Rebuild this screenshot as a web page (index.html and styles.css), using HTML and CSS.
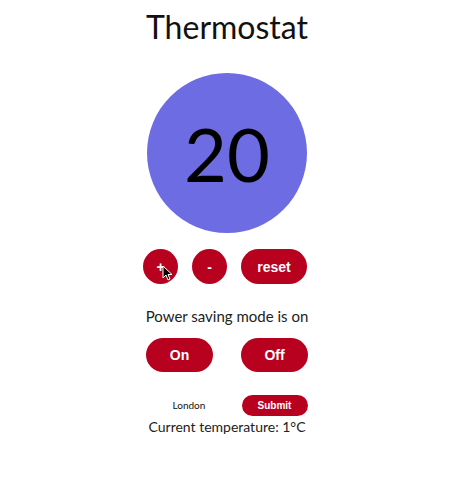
FILE: index.html
```html
<!DOCTYPE html>
<html>
<head>
<meta charset="utf-8">
<link rel="stylesheet" href="styles.css">
</head>
<body>
<div class="app">
  <h1 class="title">Thermostat</h1>
  <div class="dial">20</div>
  <div class="controls">
    <button class="btn round">+</button>
    <button class="btn round">-</button>
    <button class="btn pill">reset</button>
  </div>
  <p class="status">Power saving mode is on</p>
  <div class="modes">
    <button class="btn mode">On</button>
    <button class="btn mode">Off</button>
  </div>
  <form class="city">
    <span class="city-name">London</span>
    <button class="btn submit" type="button">Submit</button>
  </form>
  <p class="current">Current temperature: 1°C</p>
</div>
<svg class="cursor" width="11" height="16" viewBox="0 0 11 16">
  <path d="M1 1 L1 13 L4 10 L6 15 L8 14 L6 9.5 L10 9.5 Z" fill="#000" stroke="#fff" stroke-width="1" stroke-linejoin="round"/>
</svg>
</body>
</html>
```
FILE: styles.css
```css
html, body {
  margin: 0;
  background: #fff;
}
body {
  font-family: "Lato", "Noto Sans", sans-serif;
  color: #111;
  position: relative;
  width: 454px;
  height: 480px;
  overflow: hidden;
}
.app {
  display: flex;
  flex-direction: column;
  align-items: center;
}
.title {
  margin: 0;
  padding-top: 7px;
  font-size: 32px;
  line-height: 40px;
  font-weight: 400;
}
.dial {
  margin-top: 26px;
  width: 160px;
  height: 160px;
  border-radius: 50%;
  background: #6d6ce2;
  display: flex;
  align-items: center;
  justify-content: center;
  font-size: 74px;
  font-weight: 400;
  color: #000;
}
.btn {
  border: none;
  background: #b8001f;
  color: #fff;
  font-family: "Liberation Sans", Arial, sans-serif;
  font-weight: 700;
  padding: 0;
  cursor: pointer;
}
.controls {
  margin-top: 16px;
  margin-right: 4px;
  display: flex;
  gap: 14px;
}
.round {
  width: 35px;
  height: 35px;
  border-radius: 50%;
  font-size: 14px;
}
.pill {
  width: 66px;
  height: 35px;
  border-radius: 18px;
  font-size: 14px;
}
.status {
  margin: 22px 0 0;
  font-size: 15px;
  line-height: 20px;
  color: #222;
}
.modes {
  margin-top: 12px;
  display: flex;
  gap: 28px;
}
.mode {
  width: 67px;
  height: 34px;
  border-radius: 17px;
  font-size: 14px;
}
.city {
  margin: 23px 0 0;
  display: grid;
  grid-template-columns: 67px 66px;
  column-gap: 28px;
  align-items: center;
}
.city-name {
  padding-left: 26px;
  padding-bottom: 2px;
  font-size: 10px;
  color: #111;
}
.submit {
  height: 21px;
  border-radius: 11px;
  font-size: 10px;
}
.current {
  margin: 2px 0 0;
  font-size: 14px;
  line-height: 18px;
  color: #222;
}
.cursor {
  position: absolute;
  left: 162px;
  top: 265px;
}
```
